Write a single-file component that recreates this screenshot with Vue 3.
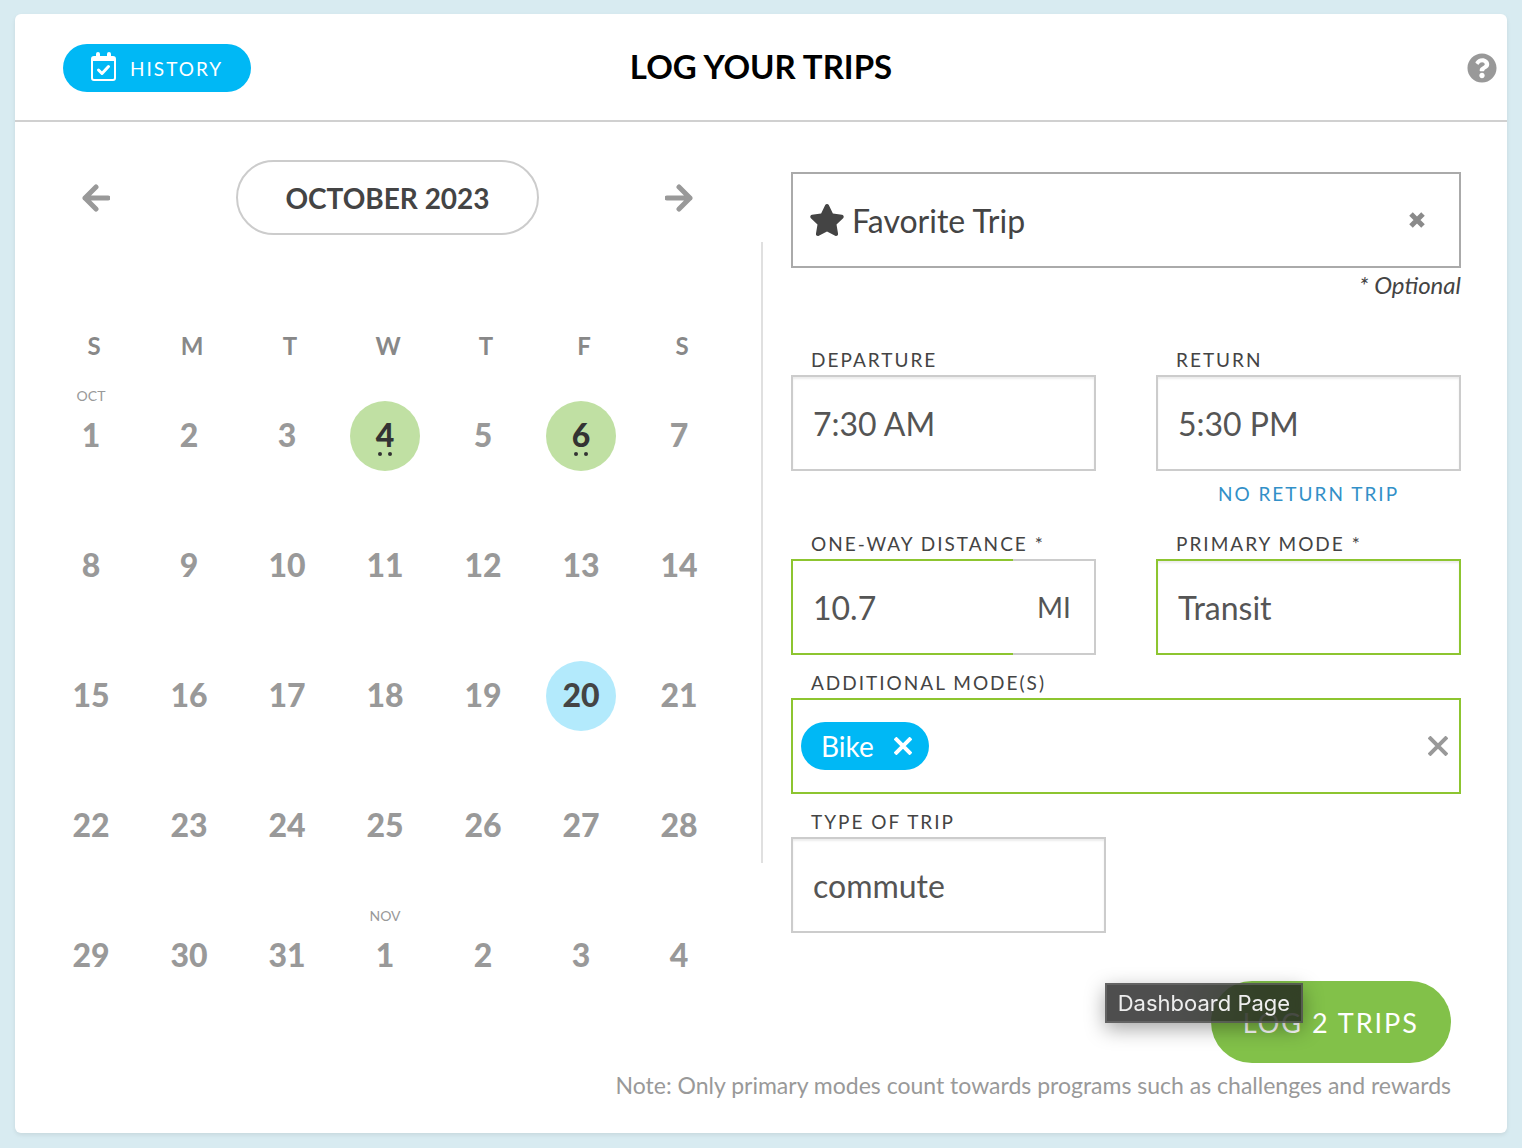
<script setup>
import { ref } from 'vue';

// Calendar header
const weekdays = [
  { short: 'S', name: 'Sunday' },
  { short: 'M', name: 'Monday' },
  { short: 'T', name: 'Tuesday' },
  { short: 'W', name: 'Wednesday' },
  { short: 'T', name: 'Thursday' },
  { short: 'F', name: 'Friday' },
  { short: 'S', name: 'Saturday' }
];

// Trips already logged, by day of the month
const logged = { 4: 2, 6: 2 };
const selectedDay = ref(20);

// 5 weeks: the 31 days of October and the first 4 of November
const weeks = [];
for (let w = 0; w < 5; w++) {
  const week = [];
  for (let d = 1; d <= 7; d++) {
    const n = w * 7 + d;
    const inMonth = n <= 31;
    week.push({
      key: n,
      number: inMonth ? n : n - 31,
      month: n === 1 ? 'OCT' : n === 32 ? 'NOV' : '',
      trips: inMonth ? logged[n] || 0 : 0
    });
  }
  weeks.push(week);
}

// Form data
const trip = ref({
  favorite: 'Favorite Trip',
  departure: '7:30 AM',
  returnTime: '5:30 PM',
  distance: '10.7',
  primaryMode: 'Transit',
  type: 'commute'
});
const additionalModes = ref(['Bike']);

const removeMode = (mode) => {
  additionalModes.value = additionalModes.value.filter((m) => m !== mode);
};
</script>

<template>
  <div class="card">
    <header class="card-header">
      <button type="button" class="history-btn">
        <svg width="25" height="29" viewBox="0 0 25 29" aria-hidden="true">
          <path fill="#fff" fill-rule="evenodd" d="M5 2a2 2 0 0 1 4 0v2h7V2a2 2 0 0 1 4 0v2h2a3 3 0 0 1 3 3v19a3 3 0 0 1-3 3H3a3 3 0 0 1-3-3V7a3 3 0 0 1 3-3h2zM2 9v17a1 1 0 0 0 1 1h19a1 1 0 0 0 1-1V9z" />
          <path fill="none" stroke="#fff" stroke-width="3" stroke-linecap="round" stroke-linejoin="round" d="M7.500 18l3.500 3.500 6.500-7" />
        </svg>
        <span>HISTORY</span>
      </button>
      <h1>LOG YOUR TRIPS</h1>
      <button type="button" class="help-btn" aria-label="Help">
        <svg width="30" height="30" viewBox="0 0 512 512" aria-hidden="true">
          <path fill="currentColor" d="M504 256c0 136.997-111.043 248-248 248S8 392.997 8 256C8 119.083 119.043 8 256 8s248 111.083 248 248zM262.655 90c-54.497 0-89.255 22.957-116.549 63.758-3.536 5.286-2.353 12.415 2.715 16.258l34.699 26.31c5.205 3.947 12.621 3.008 16.665-2.122 17.864-22.658 30.113-35.797 57.303-35.797 20.429 0 45.698 13.148 45.698 32.958 0 14.976-12.363 22.667-32.534 33.976C247.128 238.528 216 254.941 216 296v4c0 6.627 5.373 12 12 12h56c6.627 0 12-5.373 12-12v-1.333c0-28.462 83.186-29.647 83.186-106.667 0-58.002-60.165-102-116.531-102zM256 338c-25.365 0-46 20.635-46 46 0 25.364 20.635 46 46 46s46-20.636 46-46c0-25.365-20.635-46-46-46z" />
        </svg>
      </button>
    </header>

    <main class="content">
      <section class="calendar">
        <div class="month-nav">
          <button type="button" class="arrow" aria-label="Previous month">
            <svg width="28" height="28" viewBox="0 0 28 28" aria-hidden="true">
              <path d="M14 3L3 14l11 11M3 14h23" />
            </svg>
          </button>
          <button type="button" class="month">OCTOBER 2023</button>
          <button type="button" class="arrow" aria-label="Next month">
            <svg width="28" height="28" viewBox="0 0 28 28" aria-hidden="true">
              <path d="M14 3l11 11-11 11M25 14H2" />
            </svg>
          </button>
        </div>

        <table class="days">
          <thead>
            <tr>
              <th v-for="day in weekdays" :key="day.name" scope="col" :aria-label="day.name">{{ day.short }}</th>
            </tr>
          </thead>
          <tbody>
            <tr v-for="(week, i) in weeks" :key="i">
              <td v-for="day in week" :key="day.key">
                <button
                  type="button"
                  class="day"
                  :class="{ logged: day.trips, selected: day.key === selectedDay }"
                  @click="selectedDay = day.key"
                >
                  <small v-if="day.month" class="day-month">{{ day.month }}</small>
                  {{ day.number }}
                  <span v-if="day.trips" class="dots">
                    <i v-for="n in day.trips" :key="n"></i>
                  </span>
                </button>
              </td>
            </tr>
          </tbody>
        </table>
      </section>

      <div class="divider"></div>

      <form class="trip-form" @submit.prevent>
        <div>
          <div class="box favorite">
            <svg width="34" height="32" viewBox="20 0 536 512" aria-hidden="true">
              <path fill="currentColor" d="M259.3 17.8L194 150.2 47.9 171.5c-26.2 3.8-36.7 36.1-17.7 54.6l105.7 103-25 145.5c-4.5 26.3 23.2 46 46.4 33.7L288 439.6l130.7 68.7c23.2 12.2 50.9-7.4 46.4-33.7l-25-145.5 105.7-103c19-18.5 8.5-50.8-17.7-54.6L382 150.2 316.7 17.8c-11.7-23.6-45.6-23.9-57.4 0z" />
            </svg>
            <select v-model="trip.favorite" aria-label="Favorite Trip">
              <option>Favorite Trip</option>
            </select>
            <button type="button" class="clear" aria-label="Clear favorite trip">
              <svg width="16" height="16" viewBox="0 0 16 16" aria-hidden="true">
                <path stroke="#8a8a8a" stroke-width="5" d="M2 2l12 12M14 2L2 14" />
              </svg>
            </button>
          </div>
          <p class="optional">* Optional</p>
        </div>

        <div class="row">
          <div class="field">
            <label for="departure">DEPARTURE</label>
            <input id="departure" v-model="trip.departure" class="box inset" type="text">
          </div>
          <div class="field">
            <label for="return">RETURN</label>
            <input id="return" v-model="trip.returnTime" class="box inset" type="text">
            <a href="#" class="no-return">NO RETURN TRIP</a>
          </div>
        </div>

        <div class="row">
          <div class="field">
            <label for="distance">ONE-WAY DISTANCE *</label>
            <div class="distance">
              <input id="distance" v-model="trip.distance" class="box" type="text">
              <span class="unit">MI</span>
            </div>
          </div>
          <div class="field">
            <label for="primary">PRIMARY MODE *</label>
            <select id="primary" v-model="trip.primaryMode" class="box inset valid">
              <option>Transit</option>
            </select>
          </div>
        </div>

        <div class="field">
          <label for="additional">ADDITIONAL MODE(S)</label>
          <div class="box valid modes">
            <span v-for="mode in additionalModes" :key="mode" class="tag">
              {{ mode }}
              <button type="button" :aria-label="'Remove ' + mode" @click="removeMode(mode)">
                <svg width="18" height="18" viewBox="0 0 18 18" aria-hidden="true">
                  <path stroke="#fff" stroke-width="4" d="M1 1l16 16M17 1L1 17" />
                </svg>
              </button>
            </span>
            <input id="additional" type="text">
            <button type="button" class="clear" aria-label="Clear additional modes" @click="additionalModes = []">
              <svg width="20" height="20" viewBox="0 0 20 20" aria-hidden="true">
                <path stroke="#999" stroke-width="4" d="M1 1l18 18M19 1L1 19" />
              </svg>
            </button>
          </div>
        </div>

        <div class="field type">
          <label for="type">TYPE OF TRIP</label>
          <select id="type" v-model="trip.type" class="box inset">
            <option>commute</option>
          </select>
        </div>

        <div class="actions">
          <button type="submit" class="log-btn">LOG 2 TRIPS</button>
          <span class="tooltip" role="tooltip">Dashboard Page</span>
        </div>
      </form>
    </main>

    <p class="note">Note: Only primary modes count towards programs such as challenges and rewards</p>
  </div>
</template>

<style>
body {
  background: #d8ebf1;
}
</style>

<style scoped>
.card,
.card * {
  box-sizing: border-box;
}
.card {
  margin: 14px 15px 15px;
  background: #fff;
  border-radius: 6px;
  box-shadow: 0 2px 4px rgba(0, 0, 0, 0.08);
  font-family: Lato, sans-serif;
  color: #444;
}
button,
input,
select {
  font: inherit;
  color: inherit;
  margin: 0;
}
button {
  border: none;
  background: none;
  padding: 0;
  cursor: pointer;
}
svg {
  display: block;
}

/* Header */
.card-header {
  display: grid;
  grid-template-columns: 1fr auto 1fr;
  align-items: center;
  height: 108px;
  padding-top: 2px;
  border-bottom: 2px solid #d0d0d0;
}
.card-header h1 {
  margin: 0 0 4px;
  font-size: 33px;
  font-weight: 700;
  color: #000;
}
.history-btn {
  display: flex;
  align-items: center;
  justify-self: start;
  gap: 14px;
  height: 48px;
  margin-left: 48px;
  padding: 0 28px;
  border-radius: 24px;
  background: #00b8f5;
  color: #fff;
  font-size: 19px;
  letter-spacing: 2px;
}
.history-btn svg {
  margin-bottom: 4px;
}
.help-btn {
  justify-self: end;
  margin-right: 10px;
  color: #999;
}

/* Calendar */
.content {
  display: flex;
}
.calendar {
  flex: none;
  width: 50%;
  padding: 38px 33px 0 27px;
}
.month-nav {
  display: flex;
  align-items: center;
  justify-content: space-between;
  padding: 0 35px 0 40px;
}
.month {
  height: 75px;
  padding: 0 47px;
  border: 2px solid #ccc;
  border-radius: 38px;
  font-size: 28px;
  font-weight: 700;
}
.arrow path {
  fill: none;
  stroke: #999;
  stroke-width: 5;
  stroke-linecap: round;
  stroke-linejoin: round;
}
.days {
  width: 100%;
  margin-top: 91px;
  border-collapse: collapse;
  table-layout: fixed;
}
.days th {
  height: 75px;
  padding: 0 0 35px 6px;
  font-size: 24px;
  line-height: 40px;
  color: #888;
}
.days td {
  padding: 0 0 60px;
}
.days tr:last-child td {
  padding-bottom: 0;
}
.day {
  position: relative;
  display: block;
  width: 70px;
  height: 70px;
  margin: 0 auto;
  padding-bottom: 2px;
  border-radius: 50%;
  font-size: 32px;
  font-weight: 900;
  line-height: 68px;
  color: #999;
}
.day.logged {
  background: #c0e0a3;
  color: #333;
}
.day.selected {
  background: #b3eafc;
  color: #444;
}
.day-month {
  position: absolute;
  top: -15px;
  left: 0;
  width: 100%;
  font-size: 14px;
  font-weight: 400;
  line-height: 20px;
}
.dots {
  position: absolute;
  bottom: 15px;
  left: 0;
  display: flex;
  justify-content: center;
  gap: 6px;
  width: 100%;
}
.dots i {
  width: 4px;
  height: 4px;
  border-radius: 50%;
  background: #333;
}
.divider {
  flex: none;
  width: 2px;
  margin: 120px 0 200px;
  background: #e0e0e0;
}

/* Form */
.trip-form {
  flex: 1;
  display: flex;
  flex-direction: column;
  gap: 13px;
  padding: 50px 46px 0 28px;
}
.box {
  display: block;
  width: 100%;
  height: 96px;
  padding: 0 20px;
  border: 2px solid #ccc;
  border-radius: 0;
  background: #fff;
  color: #555;
  font-size: 32px;
  outline: none;
  appearance: none;
}
.inset {
  box-shadow: inset 0 2px 2px rgba(0, 0, 0, 0.08);
}
.valid {
  border-color: #8dc530;
}
.favorite {
  display: flex;
  align-items: center;
  gap: 8px;
  padding: 0 34px 0 17px;
  border-color: #aaa;
  color: #444;
}
.favorite select {
  flex: 1;
  padding: 0;
  border: none;
  background: none;
  appearance: none;
}
.optional {
  margin: 0 0 30px;
  font-size: 24px;
  font-style: italic;
  line-height: 34px;
  text-align: right;
}
.row {
  display: grid;
  grid-template-columns: 1fr 1fr;
  gap: 60px;
}
.field label {
  display: block;
  padding-left: 20px;
  font-size: 19px;
  line-height: 30px;
  letter-spacing: 2px;
}
.no-return {
  display: block;
  font-size: 19px;
  line-height: 45px;
  letter-spacing: 2px;
  text-align: center;
  text-decoration: none;
  color: #3290c8;
}
.distance {
  display: flex;
}
.distance input {
  flex: 1;
  min-width: 0;
  border-color: #8dc530;
  border-right: none;
}
.unit {
  width: 83px;
  padding-left: 24px;
  border: 2px solid #ccc;
  border-left: none;
  font-size: 28px;
  line-height: 92px;
  color: #555;
}
.modes {
  display: flex;
  align-items: center;
  padding: 0 11px 0 8px;
}
.modes input {
  flex: 1;
  min-width: 0;
  border: none;
  outline: none;
  background: none;
}
.tag {
  display: flex;
  align-items: center;
  gap: 20px;
  height: 48px;
  padding: 0 17px 0 20px;
  border-radius: 24px;
  background: #00b8f5;
  color: #fff;
  font-size: 28px;
}
.type {
  width: 47%;
}
.actions {
  position: relative;
  align-self: flex-end;
  margin: 35px 10px 0 0;
}
.log-btn {
  height: 82px;
  padding: 0 32px;
  border-radius: 41px;
  background: #82c149;
  color: #fff;
  font-size: 27px;
  letter-spacing: 2px;
}
.tooltip {
  position: absolute;
  top: 2px;
  left: -106px;
  padding: 0 11px;
  border: 2px solid rgba(120, 120, 120, 0.5);
  background: rgba(28, 28, 28, 0.78);
  backdrop-filter: blur(30px);
  box-shadow: 0 6px 20px rgba(0, 0, 0, 0.35);
  color: #eee;
  font-family: Inter, sans-serif;
  font-size: 22px;
  line-height: 36px;
  white-space: nowrap;
}
.note {
  margin: 0;
  padding: 0 56px 26px;
  font-size: 23px;
  line-height: 44px;
  text-align: right;
  color: #999;
}
</style>
